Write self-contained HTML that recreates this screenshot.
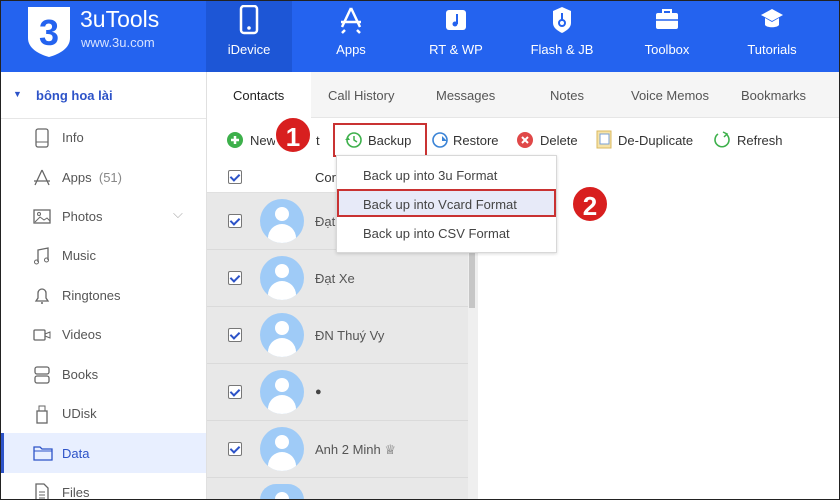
<!DOCTYPE html>
<html><head><meta charset="utf-8"><style>
*{box-sizing:border-box;margin:0;padding:0}
html,body{width:840px;height:500px;overflow:hidden}
body{font-family:"Liberation Sans","DejaVu Sans",sans-serif;background:#fff;position:relative}
.abs{position:absolute}
#hdr{left:0;top:0;width:840px;height:72px;background:#2463ef}
.nav{position:absolute;top:0;height:72px;width:86px;text-align:center;color:#fff;font-size:13px}
.nav span{position:absolute;left:0;right:0;top:42px}
.nav svg{position:absolute;left:31px;top:5px}
#side{left:0;top:72px;width:207px;height:428px;background:#fff;border-right:1px solid #e0e0e0;overflow:hidden}
.si{position:absolute;left:0;width:206px;height:39px;font-size:13px;color:#555}
.si span{position:absolute;left:62px;top:12px;line-height:15px}
.si svg{position:absolute;left:33px;top:10px}
#tabs{left:207px;top:72px;width:633px;height:46px;background:#f5f5f5;border-bottom:1px solid #e6e6e6}
.tab{position:absolute;top:16px;font-size:13px;color:#555}
.tb{position:absolute;top:133px;font-size:13px;color:#333}
#list{left:207px;top:160px;width:271px;height:340px;background:#e8e8e8;overflow:hidden}
.row{position:absolute;left:0;width:261px;height:57px;border-bottom:1px solid #dadada}
.cb{position:absolute;left:21px;width:14px;height:14px;border:1px solid #777;background:#fff;border-radius:2px}
.cb:after{content:"";position:absolute;left:3px;top:1px;width:4px;height:7px;border:solid #2d53c8;border-width:0 2px 2px 0;transform:rotate(45deg)}
.av{position:absolute;left:53px;width:44px;height:44px;border-radius:50%;background:#9fcbf7;overflow:hidden}
.av:before{content:"";position:absolute;left:15px;top:8px;width:14px;height:14px;border-radius:50%;background:#fff}
.av:after{content:"";position:absolute;left:8px;top:25px;width:28px;height:19px;border-radius:14px 14px 0 0;background:#fff}
.nm{position:absolute;left:108px;font-size:13px;color:#555}
.badge{position:absolute;width:38px;height:38px;border-radius:50%;background:#d81f1f;color:#fff;font-weight:bold;font-size:26px;text-align:center;line-height:38px;border:2px solid #fff}
</style></head><body>
<div id="hdr" class="abs">
 <svg class="abs" style="left:26px;top:5px" width="46" height="54" viewBox="0 0 46 54"><path d="M2 2h42v31c0 10-10 16-21 19C12 49 2 43 2 33z" fill="#fff"/><text x="23" y="40" text-anchor="middle" font-size="36" font-weight="bold" fill="#2463ef" font-family="Liberation Sans">3</text></svg>
 <div class="abs" style="left:80px;top:6px;color:#fff;font-size:23px">3uTools</div>
 <div class="abs" style="left:81px;top:35px;color:#d6e2ff;font-size:13px">www.3u.com</div>
 <div class="nav" style="left:206px;background:#1d56d6"><svg width="24" height="30" viewBox="0 0 24 30"><rect x="4" y="1" width="16" height="27" rx="3" fill="none" stroke="#fff" stroke-width="2.5"/><circle cx="12" cy="23" r="1.8" fill="#fff"/></svg><span>iDevice</span></div>
 <div class="nav" style="left:308px"><svg width="24" height="30" viewBox="0 0 24 30"><path d="M12 3L3 22M12 3l9 19M2 17h20M6 25l-3 3M18 25l3 3" stroke="#fff" stroke-width="2.5" fill="none"/></svg><span>Apps</span></div>
 <div class="nav" style="left:413px"><svg width="24" height="30" viewBox="0 0 24 30"><rect x="2" y="5" width="20" height="20" rx="3" fill="#fff"/><path d="M13 9v10" stroke="#2463ef" stroke-width="2"/><circle cx="11" cy="19" r="2.5" fill="#2463ef"/></svg><span>RT &amp; WP</span></div>
 <div class="nav" style="left:519px"><svg width="24" height="30" viewBox="0 0 24 30"><path d="M12 2l9 4v12c0 5-5 8-9 10-4-2-9-5-9-10V6z" fill="#fff"/><circle cx="12" cy="18" r="3" fill="none" stroke="#2463ef" stroke-width="2"/><path d="M12 8v7" stroke="#2463ef" stroke-width="2"/></svg><span>Flash &amp; JB</span></div>
 <div class="nav" style="left:624px"><svg width="24" height="30" viewBox="0 0 24 30"><rect x="1" y="8" width="22" height="16" rx="2" fill="#fff"/><path d="M8 8V5h8v3" stroke="#fff" stroke-width="2" fill="none"/><path d="M1 15h22" stroke="#2463ef" stroke-width="1.5"/></svg><span>Toolbox</span></div>
 <div class="nav" style="left:729px"><svg width="24" height="30" viewBox="0 0 24 30"><path d="M12 4L1 10l11 6 11-6z" fill="#fff"/><path d="M5 13v7c2 3 12 3 14 0v-7l-7 4z" fill="#fff"/></svg><span>Tutorials</span></div>
</div>
<div id="side" class="abs">
 <div class="abs" style="left:0;top:0;width:206px;height:47px;border-bottom:1px solid #e6e6e6"><span class="abs" style="left:13px;top:17px;font-size:9px;color:#2d53c8">▼</span><span class="abs" style="left:36px;top:16px;font-size:13px;color:#2d53c8;font-weight:bold">bông hoa lài</span></div>
 <div class="si" style="top:46px"><svg width="18" height="20"><rect x="3" y="1" width="12" height="18" rx="2" fill="none" stroke="#666" stroke-width="1.3"/><path d="M3 14h12" stroke="#666"/></svg><span>Info</span></div>
 <div class="si" style="top:86px"><svg width="18" height="20"><path d="M9 2L2 17M9 2l7 15M1 13h16" stroke="#666" stroke-width="1.3" fill="none"/></svg><span>Apps &nbsp;<span style="position:static;color:#888">(51)</span></span></div>
 <div class="si" style="top:125px"><svg width="18" height="20"><rect x="1" y="3" width="16" height="13" fill="none" stroke="#666" stroke-width="1.3"/><path d="M2 15l5-5 4 3 3-2 3 3" stroke="#666" fill="none"/><circle cx="6" cy="7" r="1.5" fill="none" stroke="#666"/></svg><span>Photos</span><span style="left:173px;top:9px;color:#aaa">⌵</span></div>
 <div class="si" style="top:164px"><svg width="18" height="20"><path d="M5 16V4l10-2v12" stroke="#666" stroke-width="1.3" fill="none"/><circle cx="3.5" cy="16" r="2" fill="none" stroke="#666"/><circle cx="13.5" cy="14" r="2" fill="none" stroke="#666"/></svg><span>Music</span></div>
 <div class="si" style="top:204px"><svg width="18" height="20"><path d="M3 15h12l-2-3V7a4 4 0 0 0-8 0v5z" stroke="#666" stroke-width="1.3" fill="none"/><path d="M8 17h2" stroke="#666" stroke-width="1.5"/></svg><span>Ringtones</span></div>
 <div class="si" style="top:243px"><svg width="18" height="20"><rect x="1" y="5" width="11" height="10" rx="1" fill="none" stroke="#666" stroke-width="1.3"/><path d="M12 9l5-2v6l-5-2" stroke="#666" fill="none"/></svg><span>Videos</span></div>
 <div class="si" style="top:283px"><svg width="18" height="20"><rect x="2" y="2" width="14" height="7" rx="2" fill="none" stroke="#666" stroke-width="1.3"/><rect x="2" y="11" width="14" height="7" rx="2" fill="none" stroke="#666" stroke-width="1.3"/></svg><span>Books</span></div>
 <div class="si" style="top:322px"><svg width="18" height="20"><rect x="4" y="7" width="10" height="12" fill="none" stroke="#666" stroke-width="1.3"/><rect x="6" y="2" width="6" height="5" fill="none" stroke="#666"/></svg><span>UDisk</span></div>
 <div class="si" style="top:361px;background:#e8efff;height:40px;color:#2d53c8"><div class="abs" style="left:0;top:0;width:4px;height:40px;background:#2d53c8"></div><svg width="20" height="20"><path d="M1 4h6l2 2h10v11H1z" fill="none" stroke="#2d53c8" stroke-width="1.3"/><path d="M1 8h18" stroke="#2d53c8"/></svg><span style="top:13px">Data</span></div>
 <div class="si" style="top:401px;height:27px;overflow:hidden"><svg width="18" height="17"><path d="M3 1h8l4 4v14H3z" fill="none" stroke="#666" stroke-width="1.3"/><path d="M6 9h6M6 12h6M6 15h6" stroke="#666"/></svg><span>Files</span></div>
</div>
<div id="tabs" class="abs">
 <div class="abs" style="left:0;top:0;width:104px;height:46px;background:#fff"></div>
 <div class="tab" style="left:26px;color:#222">Contacts</div>
 <div class="tab" style="left:121px">Call History</div>
 <div class="tab" style="left:229px">Messages</div>
 <div class="tab" style="left:343px">Notes</div>
 <div class="tab" style="left:424px">Voice Memos</div>
 <div class="tab" style="left:534px">Bookmarks</div>
</div>
<svg class="abs" style="left:226px;top:131px" width="18" height="18"><circle cx="9" cy="9" r="8" fill="#3db04b"/><path d="M9 5v8M5 9h8" stroke="#fff" stroke-width="2.5"/></svg>
<div class="tb" style="left:250px">New</div><div class="tb" style="left:316px">t</div>
<div class="abs" style="left:333px;top:123px;width:94px;height:34px;border:2px solid #c93232"></div>
<svg class="abs" style="left:344px;top:131px" width="18" height="18"><circle cx="10" cy="9" r="7" fill="none" stroke="#3db04b" stroke-width="1.6"/><path d="M10 5v4l3 2" stroke="#3db04b" stroke-width="1.5" fill="none"/><path d="M1 9l3-3 2 3z" fill="#3db04b"/></svg>
<div class="tb" style="left:368px">Backup</div>
<svg class="abs" style="left:431px;top:131px" width="18" height="18"><circle cx="9" cy="9" r="7" fill="none" stroke="#3a83d6" stroke-width="1.6"/><path d="M11 5l5 5h-5z" fill="#3a83d6"/></svg>
<div class="tb" style="left:453px">Restore</div>
<svg class="abs" style="left:516px;top:131px" width="18" height="18"><circle cx="9" cy="9" r="8" fill="#e04848"/><path d="M6 6l6 6M12 6l-6 6" stroke="#fff" stroke-width="2"/></svg>
<div class="tb" style="left:540px">Delete</div>
<svg class="abs" style="left:595px;top:130px" width="18" height="20"><rect x="2" y="1" width="14" height="17" fill="#f6e3a8" stroke="#d9b860"/><rect x="5" y="4" width="9" height="10" fill="#fff" stroke="#7aa0d6"/></svg>
<div class="tb" style="left:618px">De-Duplicate</div>
<svg class="abs" style="left:713px;top:131px" width="18" height="18"><path d="M13 3a7 7 0 1 1-8 0" fill="none" stroke="#3db04b" stroke-width="1.6"/><path d="M10 1l4 2-3 3" fill="none" stroke="#3db04b" stroke-width="1.5"/></svg>
<div class="tb" style="left:737px">Refresh</div>
<div id="list" class="abs">
 <div class="abs" style="left:0;top:0;width:271px;height:33px;background:#fff;border-bottom:1px solid #e0e0e0"></div>
 <div class="cb" style="top:10px"></div><div class="abs" style="left:108px;top:10px;font-size:13px;color:#333">Cor</div>
 <div class="row" style="top:33px"><div class="cb" style="top:21px"></div><div class="av" style="top:6px"></div><div class="nm" style="top:21px">Đạt</div></div>
 <div class="row" style="top:90px"><div class="cb" style="top:21px"></div><div class="av" style="top:6px"></div><div class="nm" style="top:21px">Đạt Xe</div></div>
 <div class="row" style="top:147px"><div class="cb" style="top:21px"></div><div class="av" style="top:6px"></div><div class="nm" style="top:21px">ĐN Thuý Vy</div></div>
 <div class="row" style="top:204px"><div class="cb" style="top:21px"></div><div class="av" style="top:6px"></div><div class="nm" style="top:22px;font-size:11px;color:#444">●</div></div>
 <div class="row" style="top:261px"><div class="cb" style="top:21px"></div><div class="av" style="top:6px"></div><div class="nm" style="top:21px">Anh 2 Minh ♕</div></div>
 <div class="abs" style="left:53px;top:324px;width:44px;height:16px;border-radius:22px 22px 0 0;background:#9fcbf7"></div>
 <div class="abs" style="left:68px;top:332px;width:14px;height:8px;border-radius:7px 7px 0 0;background:#fff"></div>
 <div class="abs" style="left:261px;top:33px;width:10px;height:307px;background:#efefef"></div>
 <div class="abs" style="left:262px;top:34px;width:6px;height:114px;background:#c6c6c6"></div>
</div>
<div class="abs" style="left:336px;top:155px;width:221px;height:98px;background:#fff;border:1px solid #d8d8d8;box-shadow:0 1px 3px rgba(0,0,0,.15)">
 <div class="abs" style="left:26px;top:12px;font-size:13px;color:#444">Back up into 3u Format</div>
 <div class="abs" style="left:0;top:33px;width:219px;height:28px;background:#e7eaf8;border:2px solid #c93232"></div>
 <div class="abs" style="left:26px;top:41px;font-size:13px;color:#444">Back up into Vcard Format</div>
 <div class="abs" style="left:26px;top:70px;font-size:13px;color:#444">Back up into CSV Format</div>
</div>
<div class="badge" style="left:274px;top:116px">1</div>
<div class="badge" style="left:571px;top:185px">2</div>
<div class="abs" style="left:0;top:0;width:840px;height:500px;border:1px solid #222;pointer-events:none"></div>
</body></html>
